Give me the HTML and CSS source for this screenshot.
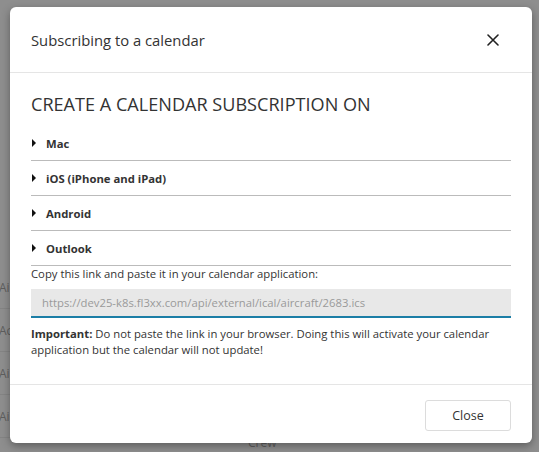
FILE: index.html
```html
<!DOCTYPE html>
<html>
<head>
<meta charset="utf-8">
<link rel="stylesheet" href="styles.css">
</head>
<body>
<div class="backdrop">
  <div class="bg-left">
    <div class="bg-row">Aircraft</div>
    <div class="bg-row">Activity</div>
    <div class="bg-row">Aircraft</div>
    <div class="bg-row">Aircraft</div>
  </div>
  <div class="bg-bottom">Crew</div>
</div>
<div class="modal">
  <div class="modal-header">
    <div class="modal-title">Subscribing to a calendar</div>
    <button class="close-x" aria-label="Close">
      <svg width="12" height="12" viewBox="0 0 12 12"><path d="M1 1L11 11M11 1L1 11" stroke="#222" stroke-width="1.6" stroke-linecap="round"/></svg>
    </button>
  </div>
  <div class="modal-body">
    <h2 class="section-title">CREATE A CALENDAR SUBSCRIPTION ON</h2>
    <div class="acc-item"><span class="caret"></span>Mac</div>
    <div class="acc-item"><span class="caret"></span>iOS (iPhone and iPad)</div>
    <div class="acc-item"><span class="caret"></span>Android</div>
    <div class="acc-item"><span class="caret"></span>Outlook</div>
    <p class="copy-label">Copy this link and paste it in your calendar application:</p>
    <div class="link-input">https://dev25-k8s.fl3xx.com/api/external/ical/aircraft/2683.ics</div>
    <p class="note"><strong>Important:</strong> Do not paste the link in your browser. Doing this will activate your calendar application but the calendar will not update!</p>
  </div>
  <div class="modal-footer">
    <button class="btn">Close</button>
  </div>
</div>
</body>
</html>
```
FILE: styles.css
```css
* { box-sizing: border-box; }
html, body { margin: 0; padding: 0; }
body {
  width: 539px;
  height: 452px;
  overflow: hidden;
  background: #8e8e8e;
  font-family: "Open Sans", "DejaVu Sans", sans-serif;
  color: #333;
  position: relative;
}
.backdrop {
  position: absolute;
  inset: 0;
}
.bg-left {
  position: absolute;
  left: -1px;
  top: 266px;
  width: 80px;
}
.bg-row {
  height: 43px;
  line-height: 43px;
  font-size: 12px;
  color: #5e5e5e;
  border-bottom: 1px solid #848484;
  white-space: nowrap;
}
.bg-bottom {
  position: absolute;
  left: 248px;
  top: 436px;
  font-size: 12px;
  line-height: 14px;
  color: #5e5e5e;
}
.modal {
  position: absolute;
  left: 10px;
  top: 7px;
  width: 522px;
  height: 436px;
  background: #fff;
  border-radius: 6px;
  box-shadow: 0 3px 9px rgba(0,0,0,0.35);
  display: flex;
  flex-direction: column;
}
.modal-header {
  height: 66px;
  border-bottom: 1px solid #e5e5e5;
  display: flex;
  align-items: center;
  justify-content: space-between;
  padding: 0 33px 0 21px;
}
.modal-title {
  font-size: 14.8px;
  color: #333;
}
.close-x {
  border: 0;
  background: none;
  padding: 0;
  width: 12px;
  height: 12px;
  display: flex;
}
.modal-body {
  padding: 18px 21px 0 21px;
  height: 312px;
  border-bottom: 1px solid #e5e5e5;
}
.section-title {
  margin: 0 0 9px 0;
  font-size: 18.1px;
  font-weight: 400;
  line-height: 26px;
  color: #333;
}
.acc-item {
  height: 35px;
  border-bottom: 1px solid #bbb;
  font-size: 11.3px;
  font-weight: 700;
  display: flex;
  align-items: center;
  color: #333;
}
.caret {
  width: 0;
  height: 0;
  border-left: 4px solid #111;
  border-top: 4px solid transparent;
  border-bottom: 4px solid transparent;
  margin: 0 10px 0 1px;
}
.copy-label {
  margin: 0 0 7px 0;
  font-size: 11.3px;
  line-height: 16px;
}
.link-input {
  height: 29px;
  background: #e8e8e8;
  border-bottom: 2px solid #1c7ea6;
  font-size: 11.3px;
  color: #9a9a9a;
  padding: 0 11px;
  line-height: 27px;
  white-space: nowrap;
}
.note {
  margin: 8px 0 0 0;
  font-size: 11.3px;
  line-height: 16px;
}
.note strong {
  font-weight: 700;
}
.modal-footer {
  flex: 1;
  display: flex;
  justify-content: flex-end;
  align-items: flex-start;
  padding: 15px 21px 0 0;
}
.btn {
  width: 86px;
  height: 31px;
  border: 1px solid #dcdcdc;
  border-radius: 3px;
  background: #fff;
  font-family: "Open Sans", sans-serif;
  font-size: 12.5px;
  color: #333;
}
```
